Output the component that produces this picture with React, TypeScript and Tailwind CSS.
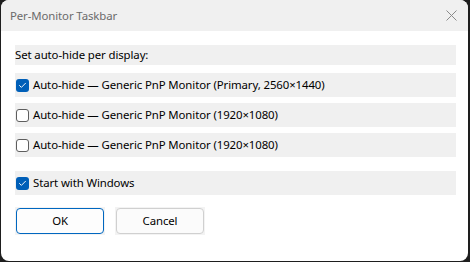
import { Check } from "lucide-react";

type Row = { label: string; checked: boolean };

const monitors: Row[] = [
  { label: "Auto-hide — Generic PnP Monitor (Primary, 2560×1440)", checked: true },
  { label: "Auto-hide — Generic PnP Monitor (1920×1080)", checked: false },
  { label: "Auto-hide — Generic PnP Monitor (1920×1080)", checked: false },
];

function Box({ checked }: { checked: boolean }) {
  return checked ? (
    <div className="w-[13px] h-[13px] rounded-[3px] bg-[#005fb8] flex items-center justify-center shrink-0">
      <Check size={9} strokeWidth={2.5} className="text-white" />
    </div>
  ) : (
    <div className="w-[13px] h-[13px] rounded-[3px] border border-[#5e5e5e] bg-white shrink-0" />
  );
}

function CheckRow({ label, checked }: Row) {
  return (
    <div className="h-[24px] bg-[#f0f0f0] flex items-center gap-[4px] pl-[1px]">
      <Box checked={checked} />
      <span>{label}</span>
    </div>
  );
}

export default function App() {
  return (
    <div
      className="w-[470px] h-[262px] bg-[#1e1e1e] pl-px pr-[2px] pb-px text-[11.4px] tracking-[-0.1px] text-black"
      style={{ fontFamily: '"Segoe UI", "Noto Sans", sans-serif' }}
    >
      <div className="w-full h-full rounded-[8px] overflow-hidden bg-white flex flex-col">
        {/* Title bar */}
        <div className="h-[31px] bg-[#f0f0f0] flex items-center justify-between pl-[9px] pr-[10px] shrink-0">
          <span className="text-[#6b6b6b]">Per-Monitor Taskbar</span>
          <svg width="11" height="11" viewBox="0 0 11 11" className="mr-[1px]">
            <path d="M0.5 0.5 L10.5 10.5 M10.5 0.5 L0.5 10.5" stroke="#8a8a8a" strokeWidth="1" fill="none" />
          </svg>
        </div>

        {/* Body */}
        <div className="pl-[14px] pr-[12px] pt-[14px]">
          <div className="h-[20px] bg-[#f0f0f0] flex items-center">Set auto-hide per display:</div>
          <div className="mt-[8px] flex flex-col gap-[6px]">
            {monitors.map((m, i) => (
              <CheckRow key={i} label={m.label} checked={m.checked} />
            ))}
          </div>
          <div className="mt-[14px]">
            <CheckRow label="Start with Windows" checked={true} />
          </div>

          <div className="mt-[12px] flex gap-[10px]">
            <div className="bg-[#f3f3f3] p-px">
              <button className="w-[88px] h-[26px] rounded-[4px] border border-[#0067c0] bg-[#fdfdfd] text-black">OK</button>
            </div>
            <div className="bg-[#f3f3f3] p-px">
              <button className="w-[88px] h-[26px] rounded-[4px] border border-[#d0d0d0] bg-[#fbfbfb] text-black">Cancel</button>
            </div>
          </div>
        </div>
      </div>
    </div>
  );
}
